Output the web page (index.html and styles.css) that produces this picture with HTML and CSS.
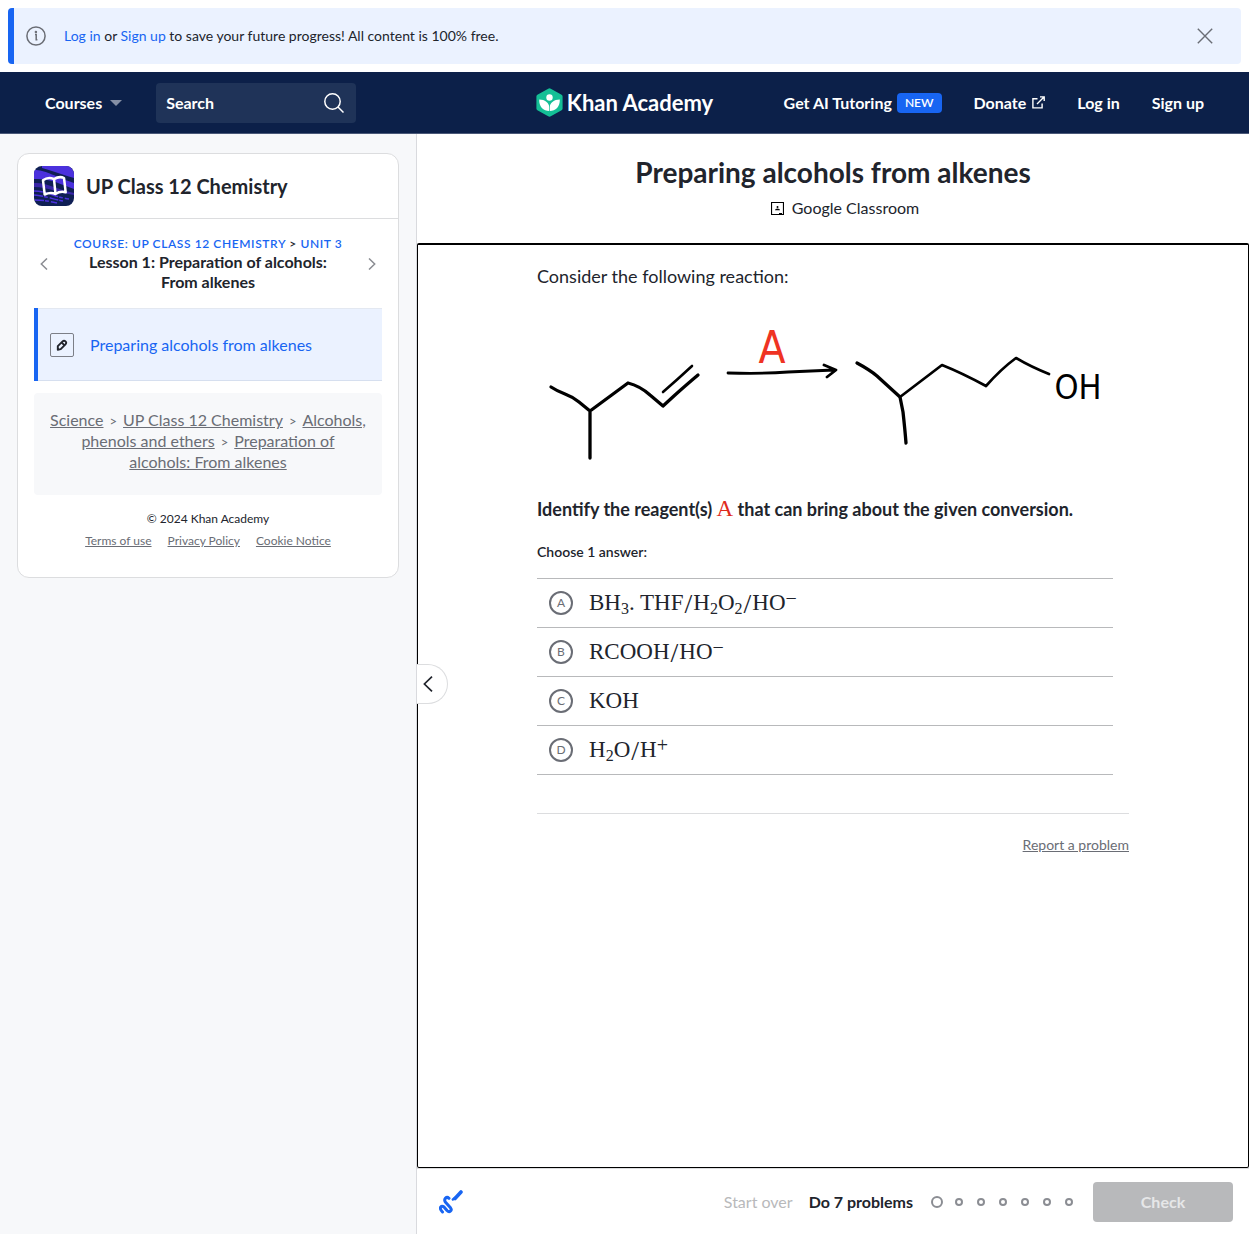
FILE: index.html
```html
<!DOCTYPE html>
<html lang="en">
<head>
<meta charset="utf-8">
<meta name="viewport" content="width=device-width, initial-scale=1">
<title>Preparing alcohols from alkenes | Khan Academy</title>
<link rel="stylesheet" href="styles.css">
</head>
<body>
<aside class="banner" aria-label="Notice">
  <svg class="banner-icon" viewBox="0 0 20 20" width="20" height="20" fill="none" stroke="currentColor" stroke-width="1.5" aria-hidden="true"><circle cx="10" cy="10" r="9.1"/><path d="M9 8.6h1.2v5.2h1.2"/><circle cx="9.9" cy="5.9" r=".5" fill="currentColor"/></svg>
  <p class="banner-text"><a href="#login">Log in</a> or <a href="#signup">Sign up</a> to save your future progress! All content is 100% free.</p>
  <button class="icon-button banner-close" type="button" aria-label="Close">
    <svg viewBox="0 0 16 16" width="16" height="16" fill="none" stroke="currentColor" stroke-width="1.4"><path d="M.8.8l14.400 14.400M15.200.8L.8 15.200"/></svg>
  </button>
</aside>

<header class="topbar">
  <div class="topbar-left">
    <button class="courses" type="button">Courses
      <svg viewBox="0 0 12 6" width="12" height="6" aria-hidden="true"><path d="M0 0h12L6 6z" fill="currentColor"/></svg>
    </button>
    <form class="search">
      <input class="search-input" type="text" placeholder="Search" aria-label="Search">
      <button class="icon-button" type="submit" aria-label="Submit search">
        <svg viewBox="0 0 20 20" width="20" height="20" fill="none" stroke="currentColor" stroke-width="1.5"><circle cx="8.500" cy="8.500" r="7.700"/><path d="M14 14l5.500 5.500"/></svg>
      </button>
    </form>
  </div>
  <a class="logo" href="#home">
    <svg viewBox="0 0 27 29" width="27" height="29" aria-hidden="true">
      <path d="M12.200.7a2.600 2.600 0 0 1 2.600 0l10.800 6.100a2 2 0 0 1 1 1.800v11.800a2 2 0 0 1-1 1.800l-10.800 6.100a2.600 2.600 0 0 1-2.600 0L1.400 22.200a2 2 0 0 1-1-1.800V8.600a2 2 0 0 1 1-1.800z" fill="#14bf96"/>
      <circle cx="13.500" cy="9.500" r="3.200" fill="#fff"/>
      <path d="M3.200 11.400c6 0 9.400 3.300 10.300 7.600.9-4.300 4.300-7.600 10.300-7.600.3 7-4 11.500-10.300 11.500S2.900 18.400 3.200 11.400z" fill="#fff"/>
      <path d="M13.500 16.500v6.500" stroke="#14bf96" stroke-width=".7"/>
    </svg>
    <span>Khan Academy</span>
  </a>
  <nav class="topbar-right" aria-label="Account">
    <a class="tutoring" href="#tutoring">Get AI Tutoring <span class="badge">NEW</span></a>
    <a class="donate" href="#donate">Donate
      <svg viewBox="0 0 13 13" width="13" height="13" fill="none" stroke="currentColor" stroke-width="1.400" aria-hidden="true"><path d="M5.500 2.700H.9v9.200h9.200V7.400M8 .9h4.200V5M12 1L5 8"/></svg>
    </a>
    <a href="#login">Log in</a>
    <a href="#signup">Sign up</a>
  </nav>
</header>

<div class="layout">
  <aside class="sidebar">
    <div class="card">
      <a class="card-header" href="#course">
        <svg class="course-icon" viewBox="0 0 40 40" width="40" height="40" aria-hidden="true">
          <rect width="40" height="40" fill="#0f1f54"/>
          <path d="M0 4C12 4 17 9 40 17v6C26 18 16 12 0 13zM8 0h28l4 6v6C28 9 20 5 8 2z" fill="#4b31dd"/>
          <path d="M0 17c12-1 22 6 40 10v2C24 27 14 21 0 21z" fill="#3926a8"/>
          <path d="M0 25c13 0 20 6 35 8M0 29c12 1 18 4 29 6M1 34c8 0 13 1 22 3" fill="none" stroke="#4b31dd" stroke-width="1.500" stroke-dasharray="9 1 4 2"/>
          <path d="M9 14.300q5-3.800 11-1.200 5.500-3.300 10-1.100l1.700 14.300q-5.500-1.500-10.200 1.700-5-2.200-10.800.5zM20 13.100l1.500 14.900" fill="none" stroke="#fff" stroke-width="2.500" stroke-linejoin="round"/>
        </svg>
        <span>UP Class 12 Chemistry</span>
      </a>
      <div class="card-body">
        <nav class="lesson" aria-label="Lesson">
          <button class="icon-button lesson-step" type="button" aria-label="Previous lesson"><svg viewBox="0 0 8 12" width="8" height="12" fill="none" stroke="currentColor" stroke-width="1.500"><path d="M7 .5L1.300 6 7 11.500"/></svg></button>
          <div class="lesson-text">
            <p class="lesson-path"><a href="#course">Course: UP Class 12 Chemistry</a> &gt; <a href="#unit">Unit 3</a></p>
            <h2 class="lesson-title">Lesson 1: Preparation of alcohols: From alkenes</h2>
          </div>
          <button class="icon-button lesson-step" type="button" aria-label="Next lesson"><svg viewBox="0 0 8 12" width="8" height="12" fill="none" stroke="currentColor" stroke-width="1.500"><path d="M1 .5L6.700 6 1 11.500"/></svg></button>
        </nav>
        <a class="task" href="#exercise" aria-current="page">
          <span class="task-icon"><svg viewBox="0 0 12 12" width="12" height="12" aria-hidden="true"><path d="M1.800 7.200l4.800-4.800q1.400-1.400 2.900 0t0 2.900l-4.800 4.800-2.900.600zM5.700 3.500l2.800 2.800" fill="none" stroke="#21242c" stroke-width="1.900" stroke-linejoin="round"/></svg></span>
          Preparing alcohols from alkenes
        </a>
        <nav class="crumbs" aria-label="Breadcrumbs">
          <a href="#science">Science</a><span class="sep">&gt;</span><a href="#course">UP Class 12 Chemistry</a><span class="sep">&gt;</span><a href="#unit">Alcohols, phenols and ethers</a><span class="sep">&gt;</span><a href="#lesson">Preparation of alcohols: From alkenes</a>
        </nav>
        <footer class="legal">
          <p>© 2024 Khan Academy</p>
          <p class="legal-links"><a href="#terms">Terms of use</a><a href="#privacy">Privacy Policy</a><a href="#cookies">Cookie Notice</a></p>
        </footer>
      </div>
    </div>
  </aside>

  <main class="main">
    <button class="collapse" type="button" aria-label="Hide sidebar"><svg viewBox="0 0 10 16" width="10" height="16" fill="none" stroke="currentColor" stroke-width="1.700"><path d="M9 .6L1.400 8 9 15.400"/></svg></button>
    <div class="title-area">
      <h1>Preparing alcohols from alkenes</h1>
      <button class="classroom" type="button">
        <svg viewBox="0 0 13 13" width="13" height="13" aria-hidden="true"><path d="M.5.500h12v12H.5z" fill="#fff" stroke="#000" stroke-width="1.200"/><circle cx="6.500" cy="5" r="1"/><path d="M4 8.200q0-1.800 2.500-1.800T9 8.200zM8 11h3v1.500H8z"/></svg>
        Google Classroom
      </button>
    </div>
    <section class="exercise">
      <div class="question">
        <p class="prompt">Consider the following reaction:</p>
        <svg class="reaction" viewBox="0 0 576 170" role="img" aria-label="4-methylpent-1-ene reacts with reagent A to give 4-methylpentan-1-ol">
          <g fill="none" stroke="#000" stroke-width="3.300" stroke-linecap="round" stroke-linejoin="round">
            <path d="M14 77q6 4 14 7t14 8l11 9v47M53 101l38-28q12 3 22 12l13 11 12-11q10-9 23-20"/>
            <path d="M126 82q15-13 29-26" stroke-width="2.600"/>
            <path d="M191 63q35 1 60-1 22-1 46-2M287 55l12 5-9 7" stroke-width="2.800"/>
            <path d="M320 53q13 7 20 13l23 21 3 15q2 18 3 31" />
            <path d="M363 87l42-32q20 8 44 21 15-17 30-28 15 9 33 16" stroke-width="2.700"/>
          </g>
          <text class="hand hand-reagent" x="235" y="53" text-anchor="middle">A</text>
          <text class="hand hand-group" x="541" y="89" text-anchor="middle">OH</text>
        </svg>
        <p class="prompt prompt-strong">Identify the reagent(s) <span class="math reagent">A</span> that can bring about the given conversion.</p>
        <fieldset class="answers">
          <legend>Choose 1 answer:</legend>
          <label class="choice"><span class="mark"><input type="radio" name="answer"><span>A</span></span><span class="math">BH<sub>3</sub>. THF<span class="slash">/</span>H<sub>2</sub>O<sub>2</sub><span class="slash">/</span>HO<sup>−</sup></span></label>
          <label class="choice"><span class="mark"><input type="radio" name="answer"><span>B</span></span><span class="math">RCOOH<span class="slash">/</span>HO<sup>−</sup></span></label>
          <label class="choice"><span class="mark"><input type="radio" name="answer"><span>C</span></span><span class="math">KOH</span></label>
          <label class="choice"><span class="mark"><input type="radio" name="answer"><span>D</span></span><span class="math">H<sub>2</sub>O<span class="slash">/</span>H<sup>+</sup></span></label>
        </fieldset>
        <div class="report"><a href="#report">Report a problem</a></div>
      </div>
    </section>
    <footer class="actions">
      <button class="icon-button scratchpad" type="button" aria-label="Show scratchpad">
        <svg viewBox="0 0 24 24" width="24" height="24" fill="none" stroke="currentColor" stroke-linecap="round" stroke-linejoin="round"><path d="M3.500 22C-.5 18 2 14.500 5 17l3 3.500c2.500 2.500 5.500 0 3.500-2.700L6.300 12C4.500 9 7.500 6 10 8.300" stroke-width="3"/><path d="M16 8.500l6-6.500" stroke-width="3.600"/><path d="M13.800 9.500l2-1.500" stroke-width="2.400"/></svg>
      </button>
      <button class="start-over" type="button" disabled>Start over</button>
      <strong class="goal">Do 7 problems</strong>
      <ol class="dots" aria-label="Progress"><li class="current"></li><li></li><li></li><li></li><li></li><li></li><li></li></ol>
      <button class="check" type="button" disabled>Check</button>
    </footer>
  </main>
</div>
</body>
</html>
```
FILE: styles.css
```css
*, *::before, *::after { box-sizing: border-box; }
body {
  margin: 0;
  min-height: 100vh;
  display: flex;
  flex-direction: column;
  background: #fff;
  color: #21242c;
  font: 16px/20px Lato, sans-serif;
}
p, h1, h2, ol { margin: 0; padding: 0; }
a { color: inherit; text-decoration: none; }
button { font: inherit; color: inherit; background: none; border: 0; padding: 0; }
svg { display: block; flex: none; }
.icon-button { display: grid; place-items: center; }

.banner {
  margin: 8px;
  min-height: 56px;
  padding: 0 28px 0 12px;
  display: flex;
  align-items: center;
  gap: 18px;
  background: #ebf2ff;
  border-left: 6px solid #1865f2;
  border-radius: 4px;
}
.banner-icon, .banner-close { color: #6a6d75; }
.banner-text { flex: 1; font-size: 14px; }
.banner-text a { color: #1865f2; }

.topbar {
  min-height: 62px;
  padding: 0 45px;
  display: grid;
  grid-template-columns: 1fr auto 1fr;
  align-items: center;
  background: #0c2049;
  border-bottom: 1px solid #4a5878;
  color: #fff;
  font-weight: 700;
}
.topbar-left, .topbar-right, .courses, .logo, .tutoring, .donate { display: flex; align-items: center; }
.topbar-left { gap: 34px; }
.courses { gap: 8px; }
.courses svg { color: #858fa5; }
.search {
  width: 200px;
  height: 40px;
  padding: 0 12px 0 10px;
  display: flex;
  align-items: center;
  background: #1f3358;
  border-radius: 4px;
}
.search-input {
  flex: 1;
  min-width: 0;
  padding: 0;
  border: 0;
  background: none;
  color: #fff;
  font: inherit;
}
.search-input::placeholder { color: #fff; opacity: 1; }
.logo { gap: 4px; font-size: 22px; line-height: 28px; }
.topbar-right { justify-content: flex-end; gap: 32px; }
.tutoring { gap: 5px; }
.donate { gap: 6px; }
.badge {
  padding: 0 8px;
  background: #1865f2;
  border-radius: 4px;
  font-size: 12px;
  font-weight: 600;
}

.layout { flex: 1; display: grid; grid-template-columns: 417px 1fr; }
.sidebar {
  padding: 19px 17px;
  background: #f7f8fa;
  border-right: 1px solid #d9dade;
}
.card {
  background: #fff;
  border: 1px solid #dcdddf;
  border-radius: 12px;
}
.card-header {
  min-height: 65px;
  padding: 0 16px;
  display: flex;
  align-items: center;
  gap: 12px;
  border-bottom: 1px solid #dcdddf;
  font-size: 20px;
  font-weight: 700;
}
.course-icon { border-radius: 8px; }
.card-body { padding: 16px 16px 28px; }
.lesson { display: flex; align-items: center; }
.lesson-step { width: 20px; height: 24px; color: #8b8d93; }
.lesson-text { flex: 1; text-align: center; }
.lesson-path { font-size: 12px; line-height: 17px; font-weight: 600; text-transform: uppercase; letter-spacing: 0.05em; }
.lesson-path a { color: #1865f2; }
.lesson-title { padding: 0 24px; font-size: 16px; font-weight: 700; }
.task {
  margin: 16px 0 12px;
  min-height: 73px;
  padding: 0 12px;
  display: flex;
  align-items: center;
  gap: 16px;
  background: #ebf2ff;
  border-left: 4px solid #1865f2;
  box-shadow: inset 0 1px #e3e8f1, inset 0 -1px #d6dfef;
  color: #1865f2;
}
.task-icon {
  width: 24px;
  height: 24px;
  display: grid;
  place-items: center;
  border: 1px solid #7c7f87;
  border-radius: 2px;
}
.crumbs {
  padding: 16px 16px 23px;
  background: #f7f8fa;
  border-radius: 4px;
  color: #6a6d75;
  line-height: 21px;
  text-align: center;
}
.crumbs a, .legal a, .report a { text-decoration: underline; }
.sep { margin: 0 6px; font-size: 13px; line-height: 1; }
.legal { padding-top: 16px; font-size: 12px; line-height: 16px; text-align: center; }
.legal-links { margin-top: 6px; display: flex; justify-content: center; gap: 16px; color: #6a6d75; }

.main { position: relative; display: flex; flex-direction: column; }
.collapse {
  position: absolute;
  top: 530px;
  left: 0;
  width: 31px;
  height: 40px;
  padding-left: 6px;
  background: #fff;
  border: 1px solid #dcdddf;
  border-left: 0;
  border-radius: 0 20px 20px 0;
}
.title-area { padding: 22px 16px 25px; display: flex; flex-direction: column; align-items: center; gap: 10px; }
h1 { font-size: 28px; line-height: 32px; font-weight: 700; }
.classroom { padding-left: 24px; display: flex; align-items: center; gap: 8px; }
.exercise {
  flex: 1;
  padding: 19px 24px;
  border: 1px solid #000;
  border-top-width: 2px;
  border-radius: 2px;
}
.question { max-width: 592px; margin: 0 auto; }
.prompt { font-size: 18px; line-height: 24px; }
.prompt-strong { font-weight: 700; }
.reaction { width: 100%; max-width: 576px; margin: 22px 0 17px; }
.hand { font-family: "DejaVu Sans Condensed", "DejaVu Sans", sans-serif; }
.hand-reagent { font-size: 44px; fill: #ef3323; }
.hand-group { font-size: 34px; }
.math { font-family: "Liberation Serif", serif; font-size: 23px; line-height: 24px; font-weight: 400; }
.math sub, .math sup { line-height: 0; }
.math sub { font-size: 16px; vertical-align: -4px; }
.math sup { font-size: 20px; vertical-align: 5px; }
.slash { margin: 0 1px; font-size: 28px; line-height: 0; vertical-align: -3px; }
.reagent { color: #df2a1c; }
.answers { max-width: 576px; margin: 21px 0 0; padding: 0; border: 0; }
.answers legend { padding: 0; margin-bottom: 16px; font-size: 14px; font-weight: 600; }
.choice {
  min-height: 49px;
  padding: 0 12px;
  display: flex;
  align-items: center;
  gap: 16px;
  border-top: 1px solid #b8b9bb;
}
.choice:last-child { min-height: 50px; border-bottom: 1px solid #b8b9bb; }
.mark { display: grid; place-items: center; color: #6a6d75; font-size: 12px; }
.mark > * { grid-area: 1 / 1; }
.mark input { appearance: none; width: 24px; height: 24px; margin: 0; border: 2px solid #6a6d75; border-radius: 50%; }
.report {
  margin-top: 38px;
  padding-top: 21px;
  border-top: 1px solid #dcdddf;
  color: #6a6d75;
  font-size: 14px;
  text-align: right;
}

.actions {
  min-height: 66px;
  padding: 0 16px 0 22px;
  display: flex;
  align-items: center;
  gap: 16px;
  border-top: 1px solid #dcdddf;
}
.scratchpad { margin-right: auto; color: #1865f2; }
.start-over { color: #b8b9bb; }
.goal { font-weight: 700; }
.dots { padding: 0 4px 0 2px; display: flex; align-items: center; gap: 14px; list-style: none; }
.dots li { width: 8px; height: 8px; border: 2px solid #8b8d93; border-radius: 50%; }
.dots .current { width: 12px; height: 12px; margin-right: -2px; }
.check {
  width: 140px;
  height: 40px;
  background: #b8b9bb;
  border-radius: 4px;
  color: #e6e7e8;
  font-weight: 700;
}
```
